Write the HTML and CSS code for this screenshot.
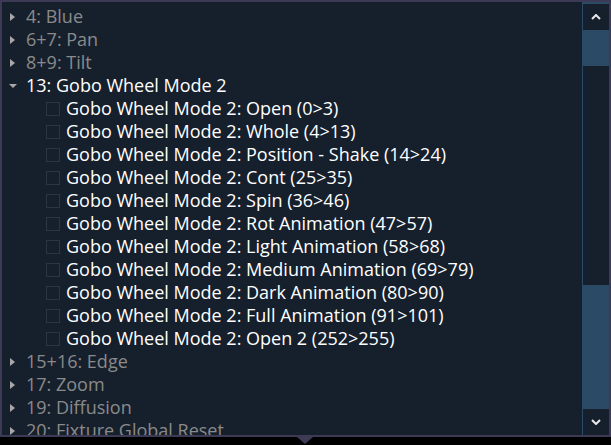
FILE: index.html
```html
<!DOCTYPE html>
<html lang="en">
<head>
    <meta charset="UTF-8">
    <meta name="viewport" content="width=device-width, initial-scale=1.0">
    <title>Channels</title>
    <link rel="stylesheet" href="styles.css">
</head>
<body>
    <div class="popup">
        <!-- Tree of channels -->
        <div class="tree">
            <div class="row group"><span class="arrow right"></span>4: Blue</div>
            <div class="row group"><span class="arrow right"></span>6+7: Pan</div>
            <div class="row group"><span class="arrow right"></span>8+9: Tilt</div>
            <div class="row group open"><span class="arrow down"></span>13: Gobo Wheel Mode 2</div>
            <div class="row child"><span class="check"></span>Gobo Wheel Mode 2: Open (0&gt;3)</div>
            <div class="row child"><span class="check"></span>Gobo Wheel Mode 2: Whole (4&gt;13)</div>
            <div class="row child"><span class="check"></span>Gobo Wheel Mode 2: Position - Shake (14&gt;24)</div>
            <div class="row child"><span class="check"></span>Gobo Wheel Mode 2: Cont (25&gt;35)</div>
            <div class="row child"><span class="check"></span>Gobo Wheel Mode 2: Spin (36&gt;46)</div>
            <div class="row child"><span class="check"></span>Gobo Wheel Mode 2: Rot Animation (47&gt;57)</div>
            <div class="row child"><span class="check"></span>Gobo Wheel Mode 2: Light Animation (58&gt;68)</div>
            <div class="row child"><span class="check"></span>Gobo Wheel Mode 2: Medium Animation (69&gt;79)</div>
            <div class="row child"><span class="check"></span>Gobo Wheel Mode 2: Dark Animation (80&gt;90)</div>
            <div class="row child"><span class="check"></span>Gobo Wheel Mode 2: Full Animation (91&gt;101)</div>
            <div class="row child"><span class="check"></span>Gobo Wheel Mode 2: Open 2 (252&gt;255)</div>
            <div class="row group"><span class="arrow right"></span>15+16: Edge</div>
            <div class="row group"><span class="arrow right"></span>17: Zoom</div>
            <div class="row group"><span class="arrow right"></span>19: Diffusion</div>
            <div class="row group"><span class="arrow right"></span>20: Fixture Global Reset</div>
        </div>

        <!-- Scrollbar -->
        <div class="scrollbar">
            <div class="scroll-btn">
                <svg width="10" height="6" viewBox="0 0 10 6"><path d="M1 5 L5 1 L9 5" fill="none" stroke="#e8e8e8" stroke-width="2"/></svg>
            </div>
            <div class="track-above"></div>
            <div class="handle"></div>
            <div class="track-below"></div>
            <div class="scroll-btn">
                <svg width="10" height="6" viewBox="0 0 10 6"><path d="M1 1 L5 5 L9 1" fill="none" stroke="#e8e8e8" stroke-width="2"/></svg>
            </div>
        </div>
    </div>
    <div class="pointer"></div>
</body>
</html>
```

FILE: styles.css
```css
body {
    margin: 0;
    background-color: #000;
    font-family: "Open Sans", "Noto Sans", sans-serif;
    overflow: hidden;
}

.popup {
    width: 611px;
    height: 437px;
    box-sizing: border-box;
    border: 2px solid #3d3a55;
    background-color: #16202d;
    display: flex;
}

.tree {
    flex-grow: 1;
    overflow: hidden;
    padding-top: 3px;
}

.row {
    height: 23px;
    line-height: 23px;
    display: flex;
    align-items: center;
    font-size: 18px;
    white-space: nowrap;
}

.group {
    color: #8a8a8a;
    padding-left: 7px;
}

.group.open {
    color: #ffffff;
}

.arrow {
    width: 17px;
    height: 10px;
    position: relative;
}

.arrow.right::before {
    content: "";
    position: absolute;
    left: 1px;
    top: 1px;
    border-left: 5px solid #a8a8a8;
    border-top: 4px solid transparent;
    border-bottom: 4px solid transparent;
}

.arrow.down::before {
    content: "";
    position: absolute;
    left: 0;
    top: 3px;
    border-top: 4px solid #a8a8a8;
    border-left: 4px solid transparent;
    border-right: 4px solid transparent;
}

.child {
    color: #ffffff;
    padding-left: 44px;
}

.check {
    width: 12px;
    height: 12px;
    border: 1px solid #283646;
    margin-right: 6px;
    flex-shrink: 0;
}

.scrollbar {
    width: 26px;
    display: flex;
    flex-direction: column;
    border-left: 1px solid #2b4a66;
    background-color: #2b4a66;
    padding-top: 2px;
}

.scroll-btn {
    height: 26px;
    background-color: #16202d;
    display: flex;
    align-items: center;
    justify-content: center;
}

.track-above {
    height: 36px;
}

.handle {
    height: 219px;
    background-color: #16202d;
}

.track-below {
    flex-grow: 1;
}

.pointer {
    width: 0;
    height: 0;
    margin-left: 297px;
    border-left: 8px solid transparent;
    border-right: 8px solid transparent;
    border-top: 7px solid #3d3a55;
}
```
